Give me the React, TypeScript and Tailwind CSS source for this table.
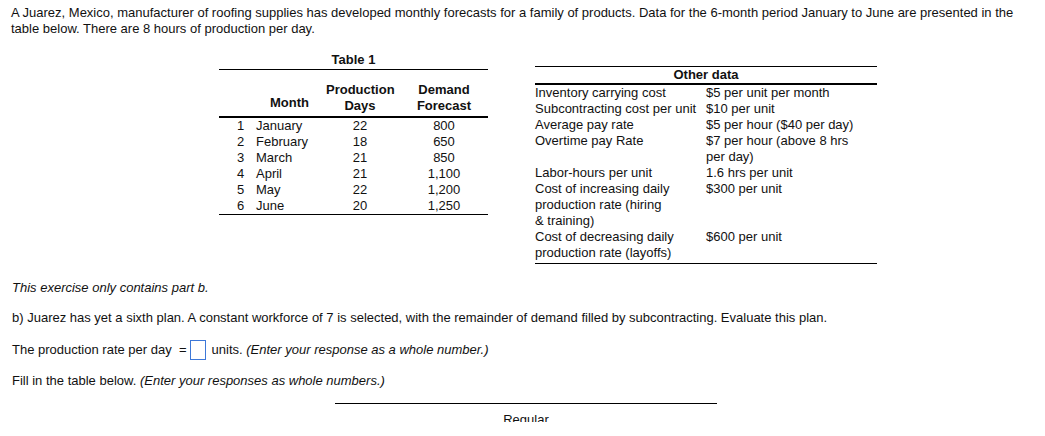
const font = { fontFamily: '"Liberation Sans", Arial, sans-serif' };

const months = [
  { n: 1, name: "January", days: 22, demand: "800" },
  { n: 2, name: "February", days: 18, demand: "650" },
  { n: 3, name: "March", days: 21, demand: "850" },
  { n: 4, name: "April", days: 21, demand: "1,100" },
  { n: 5, name: "May", days: 22, demand: "1,200" },
  { n: 6, name: "June", days: 20, demand: "1,250" },
];

const otherData: { label: React.ReactNode; value: React.ReactNode }[] = [
  { label: "Inventory carrying cost", value: "$5 per unit per month" },
  { label: "Subcontracting cost per unit", value: "$10 per unit" },
  { label: "Average pay rate", value: "$5 per hour ($40 per day)" },
  { label: "Overtime pay Rate", value: <>$7 per hour (above 8 hrs<br />per day)</> },
  { label: "Labor-hours per unit", value: "1.6 hrs per unit" },
  { label: <>Cost of increasing daily<br />production rate (hiring<br />&amp; training)</>, value: "$300 per unit" },
  { label: <>Cost of decreasing daily<br />production rate (layoffs)</>, value: "$600 per unit" },
];

function Table1() {
  return (
    <div className="w-[269px] mt-[15px] ml-[219px] shrink-0">
      <div className="text-center font-bold pb-[1px] border-b border-black">Table 1</div>
      <div className="grid grid-cols-[37px_70px_68px_94px] pt-[12px] pb-[2px] border-b-2 border-black font-bold items-end">
        <div></div>
        <div className="pl-[14px] mb-[3px]">Month</div>
        <div className="text-center">Production<br />Days</div>
        <div className="text-center pl-[6px]">Demand<br />Forecast</div>
      </div>
      <div className="border-b border-black">
        {months.map(m => (
          <div key={m.n} className="grid grid-cols-[37px_70px_68px_94px]">
            <div className="pl-[18px]">{m.n}</div>
            <div>{m.name}</div>
            <div className="text-center">{m.days}</div>
            <div className="text-center pl-[6px]">{m.demand}</div>
          </div>
        ))}
      </div>
    </div>
  );
}

function OtherData() {
  return (
    <div className="w-[342px] mt-[29px] ml-[47px] shrink-0 border-t border-black">
      <div className="text-center font-bold border-b-2 border-black">Other data</div>
      <div className="grid grid-cols-[171px_1fr] pb-[2px] border-b border-black">
        {otherData.map((r, i) => (
          <div key={i} className="contents">
            <div>{r.label}</div>
            <div>{r.value}</div>
          </div>
        ))}
      </div>
    </div>
  );
}

export default function App() {
  return (
    <div className="w-[1045px] h-[436px] bg-white overflow-hidden">
      <div className="h-[422px] overflow-hidden text-[13px] leading-[16px] text-[#111]" style={font}>
        <p className="pt-[5px] px-[11px]">
          A Juarez, Mexico, manufacturer of roofing supplies has developed monthly forecasts for a family of products. Data for the 6-month period January to June are presented in the table below. There are 8 hours of production per day.
        </p>

        <div className="flex items-start">
          <Table1 />
          <OtherData />
        </div>

        <div className="px-[12px]">
          <p className="mt-[16px] italic">This exercise only contains part b.</p>
          <p className="mt-[14px]">
            b) Juarez has yet a sixth plan. A constant workforce of 7 is selected, with the remainder of demand filled by subcontracting. Evaluate this plan.
          </p>
          <div className="mt-[14px] h-[20px] flex items-center">
            <span>The production rate per day&nbsp; =</span>
            <span className="ml-[3px] w-[16px] h-[20px] border border-[#3d78d8] bg-white"></span>
            <span className="ml-[6px]">units. <i>(Enter your response as a whole number.)</i></span>
          </div>
          <p className="mt-[13px]">
            Fill in the table below. <i>(Enter your responses as whole numbers.)</i>
          </p>
        </div>

        <div className="mt-[14px] ml-[335px] w-[382px] border-t border-black">
          <div className="mt-[8px] text-center">Regular</div>
        </div>
      </div>
    </div>
  );
}
